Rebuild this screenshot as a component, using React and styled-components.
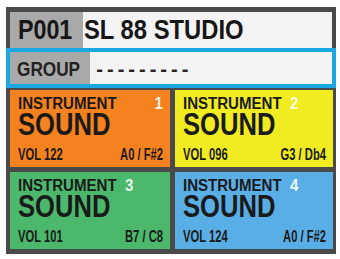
import React from 'react';
import styled, { createGlobalStyle } from 'styled-components';

const GlobalStyle = createGlobalStyle`
  body {
    margin: 0;
    background: #ffffff;
    font-family: "Liberation Sans", Arial, sans-serif;
    font-weight: bold;
    color: #1a1a1a;
  }
`;

// condensed type: the row is laid out wider, then squeezed back to its box
const Narrow = styled.div`
  width: ${p => 100 / p.$sx}%;
  transform: scaleX(${p => p.$sx});
  transform-origin: left center;
  white-space: nowrap;
`;

const Screen = styled.div`
  display: flex;
  flex-direction: column;
  width: 330px;
  margin: 7px 0 0 6px;
  padding: 5px 0;
  background: #4a4a4a;
`;

const TitleRow = styled.div`
  display: flex;
  height: 36px;
  margin: 0 4px;
  font-size: 28px;
  line-height: 36px;
  color: #161616;
`;

const GroupRow = styled.div`
  display: flex;
  height: 32px;
  border: 4px solid #1aa8e2;
  font-size: 20px;
  line-height: 30px;
  color: #222;
`;

const Label = styled.div`
  flex: 0 0 72px;
  box-sizing: border-box;
  padding: ${p => p.$top || 0}px 0 0 ${p => p.$pad}px;
  background: #a9a9a9;
`;

const Value = styled.div`
  flex: 1;
  padding: ${p => p.$top || 0}px 0 0 ${p => p.$pad}px;
  background: #f3f3f3;
`;

const Dashes = styled.div`
  letter-spacing: 4px;
  white-space: nowrap;
`;

const Grid = styled.div`
  display: grid;
  grid-template-columns: 160px 1fr;
  grid-auto-rows: 77px;
  gap: 5px;
  padding: 2px 3px 0 4px;
`;

const Card = styled.div`
  display: flex;
  flex-direction: column;
  padding: 7px 7px 0 8px;
  background: ${p => p.$bg};
`;

const Head = styled(Narrow)`
  display: flex;
  justify-content: ${p => (p.$spread ? 'space-between' : 'flex-start')};
  gap: 9px;
  font-size: 16px;
  line-height: 14px;
`;

const Num = styled.span`
  color: rgba(255, 255, 255, 0.9);
`;

const Sound = styled(Narrow)`
  font-size: 32px;
  line-height: 26px;
`;

const Foot = styled(Narrow)`
  display: flex;
  justify-content: space-between;
  margin-top: 11px;
  font-size: 16px;
  line-height: 14px;
`;

const slots = [
  { n: 1, bg: '#f6821f', vol: '122', range: 'A0 / F#2', spread: true },
  { n: 2, bg: '#f1ec21', vol: '096', range: 'G3 / Db4' },
  { n: 3, bg: '#4cb86b', vol: '101', range: 'B7 / C8' },
  { n: 4, bg: '#5aaee6', vol: '124', range: 'A0 / F#2' },
];

const App = () => (
  <>
    <GlobalStyle />
    <Screen>
      <TitleRow>
        <Label $pad={8}>
          <Narrow $sx={0.83}>P001</Narrow>
        </Label>
        <Value $pad={1}>
          <Narrow $sx={0.85}>SL 88 STUDIO</Narrow>
        </Value>
      </TitleRow>
      <GroupRow>
        <Label $pad={7} $top={2}>
          <Narrow $sx={0.86}>GROUP</Narrow>
        </Label>
        <Value $pad={6} $top={2}>
          <Dashes>---------</Dashes>
        </Value>
      </GroupRow>
      <Grid>
        {slots.map(s => (
          <Card key={s.n} $bg={s.bg}>
            <Head $sx={0.94} $spread={s.spread}>
              <span>INSTRUMENT</span>
              <Num>{s.n}</Num>
            </Head>
            <Sound $sx={0.8}>SOUND</Sound>
            <Foot $sx={0.7}>
              <span>VOL {s.vol}</span>
              <span>{s.range}</span>
            </Foot>
          </Card>
        ))}
      </Grid>
    </Screen>
  </>
);

export default App;
